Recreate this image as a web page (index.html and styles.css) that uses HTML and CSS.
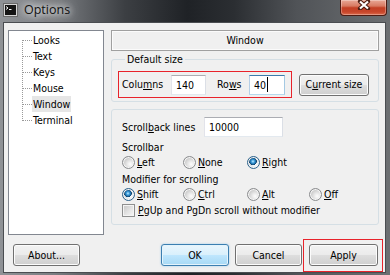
FILE: index.html
```html
<!DOCTYPE html>
<html lang="en">
<head>
    <meta charset="UTF-8">
    <title>Options</title>
    <link rel="stylesheet" href="styles.css">
</head>
<body>
    <div class="window">
        <div class="titlebar">
            <span class="app-icon">
                <svg width="15" height="14" viewBox="0 0 15 14">
                    <rect x="0.5" y="0.5" width="14" height="13" fill="#d4d4d4" stroke="#6a6a6a"/>
                    <rect x="2" y="2" width="11" height="10" fill="#141414"/>
                    <path d="M3 3.5 L5 5 L3 6.5" stroke="#fff" fill="none"/>
                    <path d="M6 6.5 H8.5" stroke="#fff"/>
                </svg>
            </span>
            <span class="title">Options</span>
            <span class="close">
                <svg width="14" height="10" viewBox="0 0 14 10">
                    <path d="M3 1.5 L11 8.5 M11 1.5 L3 8.5" stroke="#4a1c12" stroke-width="4.2" stroke-linecap="round"/>
                    <path d="M3 1.5 L11 8.5 M11 1.5 L3 8.5" stroke="#fff" stroke-width="2.2"/>
                </svg>
            </span>
        </div>

        <div class="client">
            <div class="main">
                <div class="tree">
                    <ul>
                        <li><span>Looks</span></li>
                        <li><span>Text</span></li>
                        <li><span>Keys</span></li>
                        <li><span>Mouse</span></li>
                        <li class="selected"><span>Window</span></li>
                        <li><span>Terminal</span></li>
                    </ul>
                </div>

                <div class="panel">
                    <div class="panel-title">Window</div>

                    <fieldset class="group size-group">
                        <legend>Default size</legend>
                        <div class="size-row">
                            <div class="mark size-fields">
                                <span class="lbl-cols">Colu<u>m</u>ns</span>
                                <span class="field cols">140</span>
                                <span class="lbl-rows">Ro<u>w</u>s</span>
                                <span class="field rows focus">40<span class="caret"></span></span>
                            </div>
                            <span class="btn btn-current">C<u>u</u>rrent size</span>
                        </div>
                    </fieldset>

                    <fieldset class="group scroll-group">
                        <div class="scrollback">
                            <span class="lbl-scrollback">Scroll<u>b</u>ack lines</span>
                            <span class="field lines">10000</span>
                        </div>
                        <div class="caption caption-bar">Scrollbar</div>
                        <div class="opts">
                            <span class="opt"><span class="radio"></span><span><u>L</u>eft</span></span>
                            <span class="opt"><span class="radio"></span><span><u>N</u>one</span></span>
                            <span class="opt"><span class="radio on"></span><span><u>R</u>ight</span></span>
                        </div>
                        <div class="caption caption-mod">Modifier for scrolling</div>
                        <div class="opts">
                            <span class="opt"><span class="radio on"></span><span><u>S</u>hift</span></span>
                            <span class="opt"><span class="radio"></span><span><u>C</u>trl</span></span>
                            <span class="opt"><span class="radio"></span><span><u>A</u>lt</span></span>
                            <span class="opt"><span class="radio"></span><span><u>O</u>ff</span></span>
                        </div>
                        <div class="opt check-row"><span class="check"></span><span><u>P</u>gUp and PgDn scroll without modifier</span></div>
                    </fieldset>
                </div>
            </div>

            <div class="buttons">
                <span class="btn btn-about">About...</span>
                <span class="btn btn-ok">OK</span>
                <span class="btn btn-cancel">Cancel</span>
                <span class="mark apply-mark"><span class="btn btn-apply">Apply</span></span>
            </div>
        </div>
    </div>
</body>
</html>
```

FILE: styles.css
```css
body {
    margin: 0;
    width: 390px;
    height: 275px;
    overflow: hidden;
    font-family: "DejaVu Sans Condensed", "Liberation Sans", sans-serif;
    font-size: 10.5px;
    line-height: 13px;
    color: #000;
    background: linear-gradient(90deg, #8f9296 0%, #7b7e82 14%, #3c3f43 32%, #1f2226 48%, #2b2e32 60%, #505357 76%, #6c6f72 100%);
}
.window {
    display: flex;
    flex-direction: column;
    height: 275px;
}

/* title bar */
.titlebar {
    height: 22px;
    flex: none;
    display: flex;
    align-items: flex-start;
}
.app-icon {
    width: 15px;
    height: 14px;
    margin: 3px 0 0 3px;
    line-height: 0;
}
.title {
    margin: 1px 0 0 6px;
    font-family: "Open Sans", sans-serif;
    font-size: 12.5px;
    line-height: 17px;
    color: #111;
    text-shadow: 0 0 6px #fff, 0 0 10px rgba(255, 255, 255, 0.8), 0 0 14px rgba(255, 255, 255, 0.6);
}
.close {
    margin-left: auto;
    margin-right: 3px;
    width: 47px;
    height: 16px;
    box-sizing: border-box;
    border: 1px solid #4e1b12;
    border-top: none;
    border-radius: 0 0 4px 4px;
    background: linear-gradient(#e9a896 0%, #d87a62 40%, #c33f24 52%, #c8462b 80%, #dc6c4d 100%);
    box-shadow: inset 0 0 0 1px rgba(255, 255, 255, 0.3);
    display: flex;
    justify-content: center;
    line-height: 0;
}

/* client area */
.client {
    height: 251px;
    box-sizing: border-box;
    flex: none;
    margin: 0 4px 0 3px;
    border: 1px solid #4a4d51;
    background: #f0f0f0;
    display: flex;
    flex-direction: column;
}
.main {
    display: flex;
    align-items: flex-start;
    height: 212px;
    box-sizing: border-box;
    padding: 7px 0 0 4px;
    flex: none;
}

/* tree */
.tree {
    width: 96px;
    height: 205px;
    box-sizing: border-box;
    border: 1px solid #828790;
    background: #fff;
}
.tree ul {
    list-style: none;
    margin: 0;
    padding: 1px 0 0 0;
    background: repeating-linear-gradient(to bottom, #9a9a9a 0 1px, transparent 1px 2px) 13px 9px / 1px 81px no-repeat;
}
.tree li {
    height: 16px;
    line-height: 16px;
    padding-left: 23px;
    background: repeating-linear-gradient(to right, #9a9a9a 0 1px, transparent 1px 2px) 14px 8px / 9px 1px no-repeat;
}
.tree li span {
    display: inline-block;
    padding: 0 1px;
    height: 16px;
}
.tree li.selected span {
    background: #e6e6e6;
}

/* right panel */
.panel {
    width: 268px;
    margin-left: 7px;
    display: flex;
    flex-direction: column;
}
.panel-title {
    height: 21px;
    box-sizing: border-box;
    border: 1px solid #a0a0a0;
    box-shadow: inset 0 0 0 1px #fbfbfb;
    text-align: center;
    line-height: 19px;
}
.group {
    margin: 0;
    min-width: 0;
    box-sizing: border-box;
    border: 1px solid #d5dfe5;
    border-radius: 3px;
}
.group legend {
    margin-left: 7px;
    padding: 0 2px;
    line-height: 13px;
}
.size-group {
    height: 49px;
    margin-top: 2px;
    padding: 5px 0 0 6px;
}
.size-row {
    display: flex;
    align-items: center;
}
.mark {
    border: 1px solid #e8232b;
}
.size-fields {
    display: flex;
    align-items: center;
    height: 27px;
    box-sizing: border-box;
    padding: 0 6px 0 3px;
}
.lbl-cols {
    width: 49px;
}
.lbl-rows {
    width: 32px;
    margin-left: 11px;
}

/* text fields */
.field {
    box-sizing: border-box;
    height: 20px;
    border: 1px solid;
    border-color: #abadb3 #dbdfe6 #e3e9ef #e2e3ea;
    background: #fff;
    padding-left: 4px;
    line-height: 18px;
    display: flex;
    align-items: center;
}
.field.cols {
    width: 35px;
}
.field.rows {
    width: 36px;
}
.field.focus {
    border-color: #3d7bad #a4c9e3 #b7d9ed #b5cfe7;
}
.caret {
    width: 1px;
    height: 15px;
    margin-left: 1px;
    background: #000;
}
.field.lines {
    width: 79px;
}

/* buttons */
.btn {
    display: flex;
    align-items: center;
    justify-content: center;
    box-sizing: border-box;
    height: 22px;
    border: 1px solid #707070;
    border-radius: 3px;
    background: linear-gradient(#f2f2f2 0%, #ebebeb 48%, #dddddd 52%, #cfcfcf 100%);
    box-shadow: inset 0 0 0 1px #fcfcfc;
}
.btn-current {
    width: 70px;
    margin-left: 7px;
}

/* scrolling group */
.scroll-group {
    height: 116px;
    margin-top: 7px;
    padding: 7px 0 0 10px;
    display: flex;
    flex-direction: column;
}
.scrollback {
    display: flex;
    align-items: center;
    height: 20px;
}
.lbl-scrollback {
    width: 82px;
}
.caption {
    height: 13px;
}
.caption-bar {
    margin-top: 4px;
}
.caption-mod {
    margin-top: 4px;
}
.opts {
    display: grid;
    grid-template-columns: 61px 64px 62px auto;
    margin-top: 2px;
}
.opt {
    display: flex;
    align-items: center;
    gap: 2px;
    height: 13px;
}
.radio {
    width: 13px;
    height: 13px;
    box-sizing: border-box;
    border-radius: 50%;
    border: 1px solid #8a8c8e;
    background: radial-gradient(circle at 65% 65%, #fdfdfd 0, #f0f0f0 2px, #d0d0d0 6px);
    box-shadow: inset 0 0 0 1px #f6f6f6;
}
.radio.on {
    border-color: #2c628b;
    background:
        radial-gradient(circle at 45% 40%, #c6ecff 0, #43a3e0 1.5px, #1a6ba6 2.8px, #0f3f66 3.6px, transparent 4px),
        radial-gradient(circle at 65% 65%, #fdfdfd 0, #eef4f8 2px, #c9d3da 6px);
}
.check-row {
    margin-top: 3px;
    gap: 3px;
}
.check {
    width: 13px;
    height: 13px;
    box-sizing: border-box;
    border: 1px solid #8e8f8f;
    background: linear-gradient(135deg, #c4c4c4 0%, #e4e4e4 55%, #f8f8f8 100%);
    box-shadow: inset 0 0 0 1px #f4f4f4;
}

/* bottom button row */
.buttons {
    display: flex;
    align-items: flex-start;
    height: 22px;
    flex: none;
    margin-top: 9px;
    padding: 0 7px 0 9px;
}
.btn-about {
    width: 67px;
}
.btn-ok {
    width: 68px;
    margin-left: auto;
    border-color: #3c7fb1;
    background: linear-gradient(#eaf6fd 0%, #d9f0fc 48%, #bee6fd 52%, #a7d9f5 100%);
    box-shadow: inset 0 0 0 1px #e4f4fc, 0 0 2px rgba(60, 160, 230, 0.5);
}
.btn-cancel {
    width: 67px;
    margin-left: 6px;
}
.apply-mark {
    display: flex;
    margin: -5px -5px -6px 1px;
    padding: 4px 4px 5px 5px;
}
.btn-apply {
    width: 69px;
}
```
